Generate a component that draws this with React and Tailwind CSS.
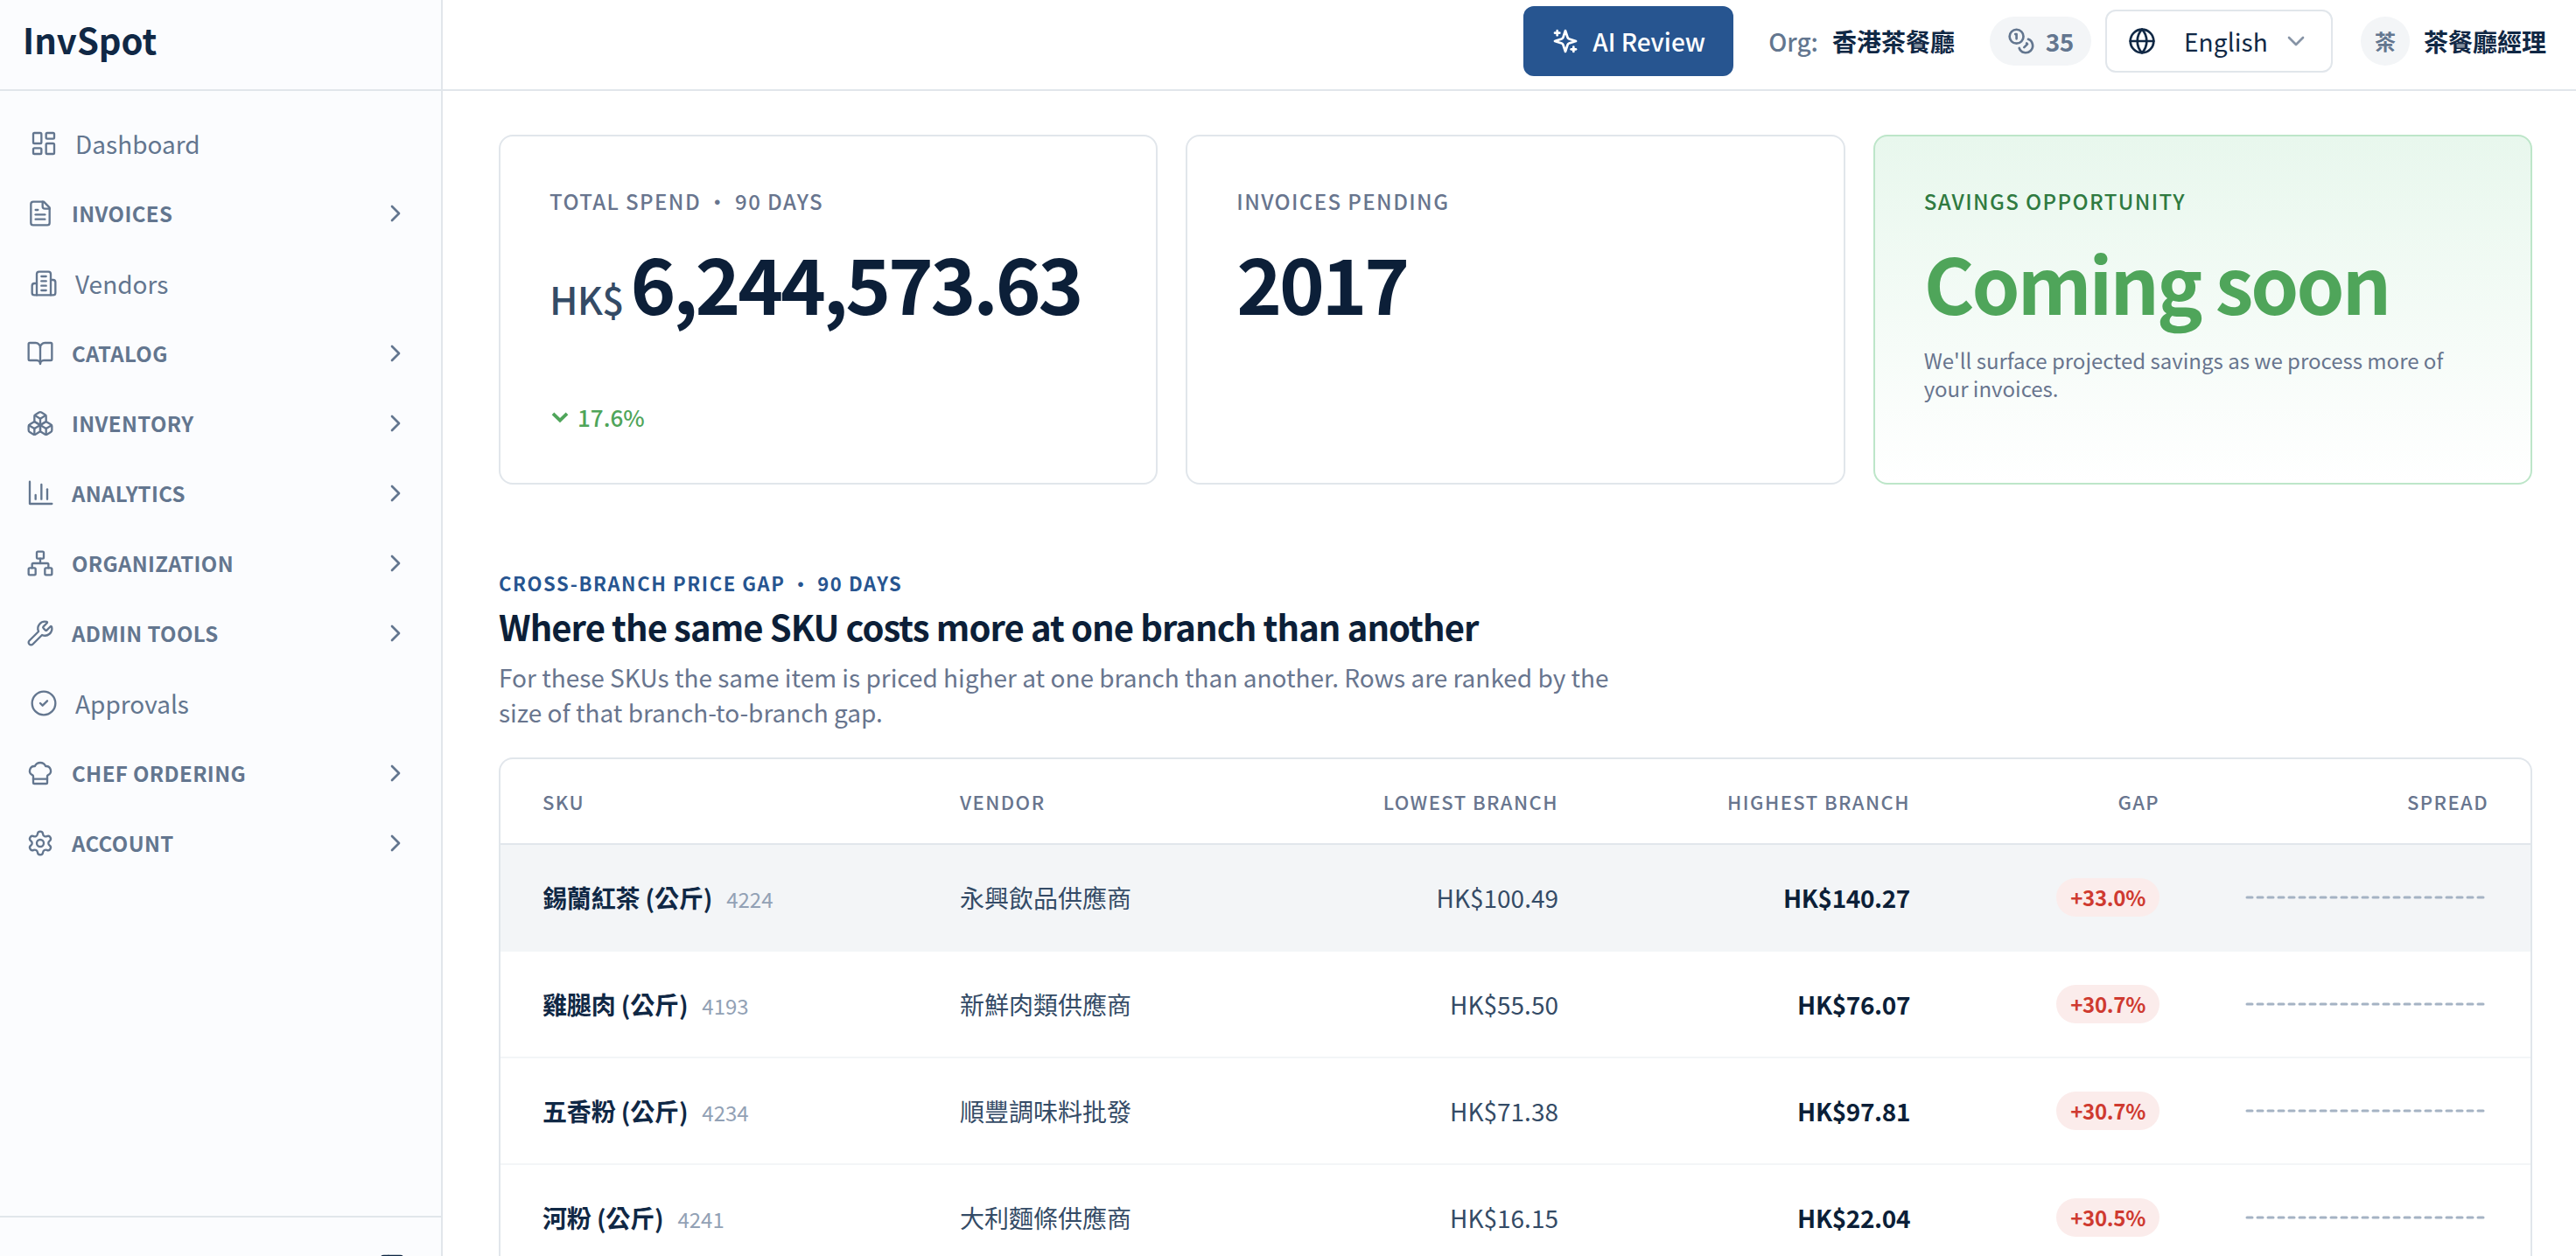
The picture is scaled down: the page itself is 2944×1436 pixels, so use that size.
import React from "react";
import {
  BookOpen,
  Boxes,
  ChefHat,
  ChevronDown,
  ChevronRight,
  CircleCheck,
  Coins,
  Globe,
  LayoutDashboard,
  Network,
  PanelLeft,
  Settings,
  Wrench,
} from "lucide-react";

const svgProps = {
  viewBox: "0 0 24 24",
  fill: "none",
  stroke: "currentColor",
  strokeLinecap: "round",
  strokeLinejoin: "round",
};

function InvoiceIcon(props) {
  return (
    <svg {...svgProps} {...props}>
      <path d="M15 2H6a2 2 0 0 0-2 2v16a2 2 0 0 0 2 2h12a2 2 0 0 0 2-2V7Z" />
      <path d="M14 2v4a2 2 0 0 0 2 2h4" />
      <path d="M10 9H8" />
      <path d="M16 13H8" />
      <path d="M16 17H8" />
    </svg>
  );
}

function VendorIcon(props) {
  return (
    <svg {...svgProps} {...props}>
      <path d="M6 22V4a2 2 0 0 1 2-2h8a2 2 0 0 1 2 2v18Z" />
      <path d="M6 12H4a2 2 0 0 0-2 2v6a2 2 0 0 0 2 2h2" />
      <path d="M18 9h2a2 2 0 0 1 2 2v9a2 2 0 0 1-2 2h-2" />
      <path d="M10 6h4" />
      <path d="M10 10h4" />
      <path d="M10 14h4" />
      <path d="M10 18h4" />
    </svg>
  );
}

function ChartIcon(props) {
  return (
    <svg {...svgProps} {...props}>
      <path d="M3 2v19h19" />
      <path d="M8 17v-3.5" />
      <path d="M13 17V4.5" />
      <path d="M18 17V8.5" />
    </svg>
  );
}

function SparklesIcon(props) {
  return (
    <svg {...svgProps} {...props}>
      <path d="m12 3-1.912 5.813a2 2 0 0 1-1.275 1.275L3 12l5.813 1.912a2 2 0 0 1 1.275 1.275L12 21l1.912-5.813a2 2 0 0 1 1.275-1.275L21 12l-5.813-1.912a2 2 0 0 1-1.275-1.275L12 3Z" />
      <path d="M5 3v4" />
      <path d="M19 17v4" />
      <path d="M3 5h4" />
      <path d="M17 19h4" />
    </svg>
  );
}

const navItems = [
  { label: "Dashboard", icon: LayoutDashboard },
  { label: "Invoices", icon: InvoiceIcon, group: true },
  { label: "Vendors", icon: VendorIcon },
  { label: "Catalog", icon: BookOpen, group: true },
  { label: "Inventory", icon: Boxes, group: true },
  { label: "Analytics", icon: ChartIcon, group: true },
  { label: "Organization", icon: Network, group: true },
  { label: "Admin Tools", icon: Wrench, group: true },
  { label: "Approvals", icon: CircleCheck },
  { label: "Chef Ordering", icon: ChefHat, group: true },
  { label: "Account", icon: Settings, group: true },
];

const gaps = [
  { name: "錫蘭紅茶 (公斤)", sku: "4224", vendor: "永興飲品供應商", low: "HK$100.49", high: "HK$140.27", gap: "+33.0%", active: true },
  { name: "雞腿肉 (公斤)", sku: "4193", vendor: "新鮮肉類供應商", low: "HK$55.50", high: "HK$76.07", gap: "+30.7%" },
  { name: "五香粉 (公斤)", sku: "4234", vendor: "順豐調味料批發", low: "HK$71.38", high: "HK$97.81", gap: "+30.7%" },
  { name: "河粉 (公斤)", sku: "4241", vendor: "大利麵條供應商", low: "HK$16.15", high: "HK$22.04", gap: "+30.5%" },
];

function NavItem({ label, icon: Icon, group }) {
  if (group) {
    return (
      <button className="flex h-20 w-full items-center pl-[30px] pr-9 text-[24px] font-bold uppercase tracking-[0.36px]">
        <Icon className="mr-5 size-8" strokeWidth={1.75} />
        <span>{label}</span>
        <ChevronRight className="ml-auto size-8" strokeWidth={2} />
      </button>
    );
  }
  return (
    <a className="flex h-20 items-center pl-[34px] text-[28px]">
      <Icon className="mr-5 size-8" strokeWidth={1.75} />
      <span>{label}</span>
    </a>
  );
}

function Sidebar() {
  return (
    <aside className="flex w-[506px] shrink-0 flex-col border-r-2 border-[#e1e6eb] bg-[#fbfcfe] text-[#63768f]">
      <div className="flex h-[104px] shrink-0 items-center border-b-2 border-[#e1e6eb] pb-3 pl-[26px]">
        <span className="text-[40px] leading-none font-bold text-[#102845]">InvSpot</span>
      </div>
      <nav className="flex-1 pt-5">
        {navItems.map((item) => (
          <NavItem key={item.label} {...item} />
        ))}
      </nav>
      <div className="flex h-[46px] shrink-0 justify-end overflow-hidden border-t-2 border-[#e1e6eb] pt-10 pr-10">
        <PanelLeft className="size-8 shrink-0 text-[#102845]" />
      </div>
    </aside>
  );
}

function Header() {
  return (
    <header className="flex h-[104px] shrink-0 items-center justify-end border-b-2 border-[#e1e6eb] pr-[34px] pb-2 text-[28px] text-[#102845]">
      <button className="flex h-20 w-60 items-center justify-center gap-[15px] rounded-xl bg-[#275590] font-medium text-white">
        <SparklesIcon className="size-8" strokeWidth={2} />
        AI Review
      </button>
      <div className="ml-10 flex items-center gap-4">
        <span className="font-medium text-[#63768f]">Org:</span>
        <span className="font-bold">香港茶餐廳</span>
      </div>
      <div className="ml-10 flex h-14 w-[116px] items-center gap-3 rounded-full bg-[#f3f5f7] px-5 font-bold tracking-[-0.4px] text-[#63768f]">
        <Coins className="size-8" strokeWidth={2} />
        35
      </div>
      <button className="ml-4 flex h-[72px] w-[260px] items-center rounded-xl border-2 border-[#e1e6eb] px-6">
        <Globe className="size-8" strokeWidth={2} />
        <span className="ml-8 tracking-[0.1px]">English</span>
        <ChevronDown className="ml-auto size-8 text-[#8794a6]" strokeWidth={2} />
      </button>
      <div className="ml-8 flex items-center gap-4">
        <div className="flex size-14 items-center justify-center rounded-full bg-[#f3f5f7] text-[24px] font-bold text-[#63768f]">茶</div>
        <span className="font-bold">茶餐廳經理</span>
      </div>
    </header>
  );
}

function StatCards() {
  return (
    <div className="grid grid-cols-3 gap-8">
      <div className="flex h-[400px] flex-col rounded-2xl border-2 border-[#e1e6eb] p-14">
        <p className="text-[24px] leading-[36px] font-medium tracking-[1.4px] text-[#68758e]">TOTAL SPEND • 90 DAYS</p>
        <p className="mt-[30px] flex items-baseline gap-2 leading-[88px]">
          <span className="text-[44px] font-medium tracking-[-0.8px] text-[#344b66]">HK$</span>
          <span className="text-[88px] font-bold tracking-[-3.2px] text-[#0c1f38]">6,244,573.63</span>
        </p>
        <div className="mt-auto flex h-10 items-center gap-2 text-[26px] font-medium text-[#4fa55a]">
          <svg viewBox="0 0 24 24" className="size-6" fill="none" stroke="currentColor" strokeWidth="3.8">
            <path d="M4 8.8 12 16.6 20 8.8" />
          </svg>
          17.6%
        </div>
      </div>
      <div className="h-[400px] rounded-2xl border-2 border-[#e1e6eb] p-14">
        <p className="text-[24px] leading-[36px] font-medium tracking-[1.4px] text-[#68758e]">INVOICES PENDING</p>
        <p className="mt-[30px] text-[88px] leading-[88px] font-bold tracking-[-3.3px] text-[#0c1f38]">2017</p>
      </div>
      <div className="h-[400px] rounded-2xl border-2 border-[#bde6c9] bg-gradient-to-b from-[#e8f7ed] to-white p-14">
        <p className="text-[24px] leading-[36px] font-medium tracking-[1.4px] text-[#2f7a40]">SAVINGS OPPORTUNITY</p>
        <p className="mt-[30px] text-[88px] leading-[88px] font-bold tracking-[-2.9px] text-[#4fa55a]">Coming soon</p>
        <p className="mt-[30px] max-w-[600px] text-[24px] leading-[32px] text-[#68758e]">
          We'll surface projected savings as we process more of your invoices.
        </p>
      </div>
    </div>
  );
}

function GapTable() {
  return (
    <div className="mt-8 overflow-hidden rounded-t-2xl border-2 border-b-0 border-[#e1e6eb]">
      <div className="grid h-[98px] grid-cols-[477px_280px_404px_402px_285px_376px] items-center border-b-2 border-[#e1e6eb] px-12 text-[22px] font-medium tracking-[1.45px] text-[#68758e]">
        <span>SKU</span>
        <span>VENDOR</span>
        <span className="text-right">LOWEST BRANCH</span>
        <span className="text-right">HIGHEST BRANCH</span>
        <span className="text-right">GAP</span>
        <span className="text-right">SPREAD</span>
      </div>
      {gaps.map((row) => (
        <div
          key={row.sku}
          className={`grid h-[122px] grid-cols-[477px_280px_404px_402px_285px_376px] items-center border-b-2 border-[#f3f5f7] px-12 text-[28px] ${
            row.active ? "bg-[#f3f5f7]" : "bg-white"
          }`}
        >
          <div className="flex items-baseline gap-4">
            <span className="font-bold tracking-[-0.15px] text-[#102845]">{row.name}</span>
            <span className="text-[24px] text-[#92a1b5]">{row.sku}</span>
          </div>
          <span className="text-[#344b66]">{row.vendor}</span>
          <span className="text-right text-[#344b66]">{row.low}</span>
          <span className="text-right font-bold tracking-[-0.4px] text-[#0c1f38]">{row.high}</span>
          <div className="flex justify-end">
            <span className="flex h-11 items-center rounded-full bg-[#fbeceb] px-4 text-[24px] font-bold tracking-[-0.3px] text-[#cf3a30]">
              {row.gap}
            </span>
          </div>
          <div className="flex justify-end">
            <svg viewBox="0 0 276 8" className="h-2 w-[276px] overflow-visible text-[#a5b3c4]">
              <path d="M0 4H272" stroke="currentColor" strokeWidth="3" strokeDasharray="6 6" strokeLinecap="round" />
            </svg>
          </div>
        </div>
      ))}
    </div>
  );
}

export default function App() {
  return (
    <div className="flex h-[1436px] w-[2944px] overflow-hidden bg-white font-['Noto_Sans_CJK_TC','Noto_Sans',sans-serif]">
      <Sidebar />
      <div className="flex min-w-0 flex-1 flex-col">
        <Header />
        <main className="min-h-0 flex-1 overflow-hidden pt-[50px] pr-[50px] pl-16">
          <StatCards />
          <section className="mt-24">
            <p className="text-[22px] leading-8 font-bold tracking-[1.58px] text-[#275590]">CROSS-BRANCH PRICE GAP • 90 DAYS</p>
            <h2 className="mt-2.5 text-[40px] leading-[48px] font-bold tracking-[-0.94px] text-[#0c1f38]">
              Where the same SKU costs more at one branch than another
            </h2>
            <p className="mt-3.5 max-w-[1300px] text-[28px] leading-10 text-[#68758e]">
              For these SKUs the same item is priced higher at one branch than another. Rows are ranked by the size of that branch-to-branch gap.
            </p>
            <GapTable />
          </section>
        </main>
      </div>
    </div>
  );
}
